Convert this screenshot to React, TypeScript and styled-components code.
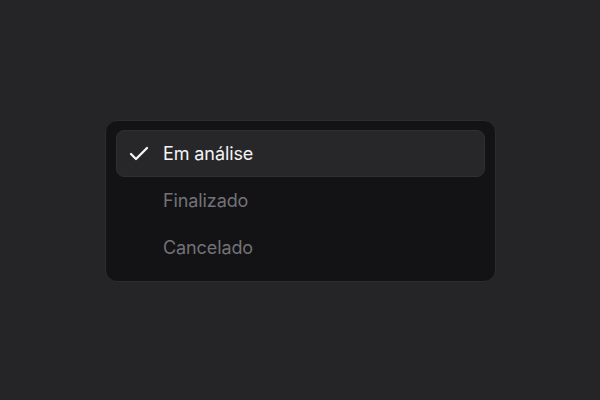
import React from "react";
import styled, { createGlobalStyle } from "styled-components";
import { Check } from "lucide-react";

const Global = createGlobalStyle`
  html, body { margin: 0; padding: 0; background: #252527; }
  body { font-family: Inter, "Noto Sans", sans-serif; -webkit-font-smoothing: antialiased; }
`;

const Page = styled.div`
  width: 600px;
  height: 400px;
  display: flex;
  align-items: flex-start;
  justify-content: center;
  padding-top: 120px;
  padding-left: 1px;
  box-sizing: border-box;
`;

const Panel = styled.div`
  width: 391px;
  box-sizing: border-box;
  background: #131315;
  border: 1px solid #2c2c2f;
  border-radius: 12px;
  padding: 9px 10px 10px;
  display: flex;
  flex-direction: column;
`;

const Item = styled.div<{ $active?: boolean }>`
  height: 47px;
  box-sizing: border-box;
  display: flex;
  align-items: center;
  gap: 12px;
  padding-left: 10px;
  border-radius: 8px;
  background: ${(p) => (p.$active ? "#27272a" : "transparent")};
  border: 1px solid ${(p) => (p.$active ? "#2f2f33" : "transparent")};
  color: ${(p) => (p.$active ? "#f4f4f5" : "#727278")};
  font-size: 18px;
  font-weight: 400;
  letter-spacing: -0.1px;
`;

const IconSlot = styled.span`
  width: 24px;
  height: 24px;
  display: flex;
  align-items: center;
  justify-content: center;
  color: #f4f4f5;
`;

const options = ["Em análise", "Finalizado", "Cancelado"];

export default function App() {
  const selected = 0;
  return (
    <>
      <Global />
      <Page>
        <Panel>
          {options.map((o, i) => (
            <Item key={o} $active={i === selected}>
              <IconSlot>{i === selected && <Check size={24} strokeWidth={2.3} />}</IconSlot>
              {o}
            </Item>
          ))}
        </Panel>
      </Page>
    </>
  );
}
